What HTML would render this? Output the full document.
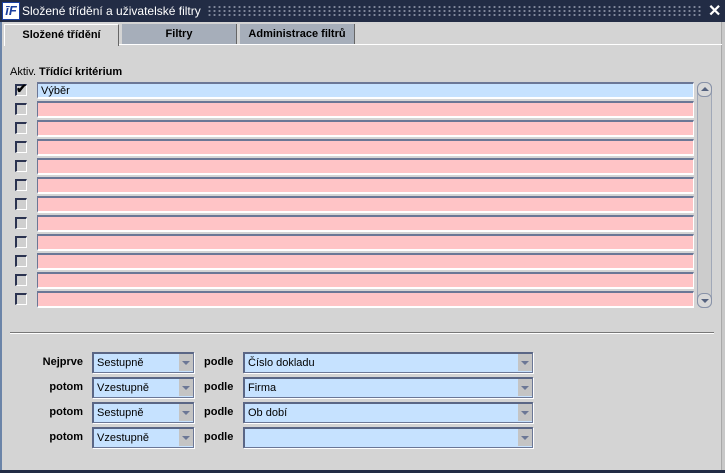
<!DOCTYPE html>
<html><head><meta charset="utf-8"><style>
*{margin:0;padding:0;box-sizing:border-box}
body{width:725px;height:473px;overflow:hidden;background:#d4d4d4;font-family:"Liberation Sans",sans-serif;font-size:11px;position:relative;color:#000}
.a{position:absolute}
.title{left:0;top:0;width:725px;height:22px;background:#222c45}
.dots{left:207px;top:5px;width:494px;height:12px;background-image:radial-gradient(circle,#7f879a 1px,transparent 1.2px);background-size:5px 4px}
.fld{position:absolute;height:17px;border-top:2px solid #6b7796;border-left:1px solid #6b7796;border-right:1px solid #fff;border-bottom:2px solid #fff}
.pink{background:#ffc4c6}
.blue{background:#c6e2ff}
.cb{position:absolute;width:12px;height:12px;background:#cfcfcf;border-top:2px solid #2b3350;border-left:2px solid #2b3350;border-right:1px solid #fff;border-bottom:1px solid #fff}
.lbl{position:absolute;font-weight:bold;font-size:11px;text-align:right}
.dd{position:absolute;height:21px;background:#c6e2ff;border:1px solid #6b7796;border-top:2px solid #5a6685;border-left:2px solid #5a6685;box-shadow:1px 1px 0 #fff;padding:3px 0 0 3px;font-size:11px}
.dd .b{position:absolute;right:0;top:0;width:14px;height:17px;background:#c4c4c4}
.dd .b:after{content:"";position:absolute;left:3px;top:7px;border-left:4px solid transparent;border-right:4px solid transparent;border-top:4px solid #6b7796}
.tab{position:absolute;top:24px;height:20px;font-weight:bold;font-size:11px;text-align:center;padding-top:4px}
</style></head><body>
<div class="a title"></div>
<div class="a" style="left:2px;top:2px;width:18px;height:18px;background:#fff;border:1px solid #1a3fa0"><div style="color:#1a3fa0;font-weight:bold;font-style:italic;font-size:13px;line-height:16px;text-align:center">īF</div></div>
<div class="a" style="left:22px;top:4px;color:#fff;font-size:12px">Složené třídění a uživatelské filtry</div>
<div class="a dots"></div>
<div class="a" style="left:708px;top:1px;color:#fff;font-size:16px;font-weight:bold">✕</div>
<div class="a" style="left:0;top:22px;width:2px;height:451px;background:#6b84a8"></div>
<div class="a" style="left:0;top:470px;width:725px;height:3px;background:#222c45"></div>
<div class="a" style="left:721px;top:22px;width:4px;height:448px;background:#c8c8c8;border-left:1px solid #a8a8a8"></div>
<div class="tab" style="left:4px;width:115px;background:#d4d4d4;border-left:1px solid #fff;border-top:1px solid #fff;border-right:1px solid #666;height:22px;z-index:2">Složené třídění</div>
<div class="tab" style="left:122px;width:115px;background:#a6aeba;border-right:1px solid #666">Filtry</div>
<div class="tab" style="left:240px;width:115px;background:#a6aeba;border-right:1px solid #666">Administrace filtrů</div>
<div class="a" style="left:4px;top:44px;width:718px;height:1px;background:#fff"></div>
<div class="a" style="left:10px;top:66px">Aktiv.</div>
<div class="a" style="left:39px;top:66px;font-weight:bold">Třídící kritérium</div>
<div id="rows"></div>
<div class="a" style="left:697px;top:82px;width:15px;height:226px;background:#cccccc;border:1px solid #a0a8b8;border-radius:6px"></div>
<div class="a" style="left:697px;top:82px;width:15px;height:15px;border:1px solid #8892a8;border-radius:6px;background:#d8d8d8"><div style="position:absolute;left:3px;top:4px;border-left:4px solid transparent;border-right:4px solid transparent;border-bottom:4px solid #55627f"></div></div>
<div class="a" style="left:697px;top:293px;width:15px;height:15px;border:1px solid #8892a8;border-radius:6px;background:#d8d8d8"><div style="position:absolute;left:3px;top:5px;border-left:4px solid transparent;border-right:4px solid transparent;border-top:4px solid #55627f"></div></div>
<div class="a" style="left:10px;top:332px;width:704px;height:2px;background:#777;border-bottom:1px solid #fff"></div>
<div id="bot"></div>
<script>
var h='';
for(var i=0;i<12;i++){var y=82+i*19;
h+='<div class="cb" style="left:15px;top:'+(y+2)+'px">'+(i==0?'<span style="position:absolute;left:-1px;top:-5px;font-size:13px;font-weight:bold">✔</span>':'')+'</div>';
h+='<div class="fld '+(i==0?'blue':'pink')+'" style="left:37px;top:'+y+'px;width:657px">'+(i==0?'<span style="position:absolute;left:3px;top:1px">Výběr</span>':'')+'</div>';}
document.getElementById('rows').innerHTML=h;
var L=['Nejprve','potom','potom','potom'],D=['Sestupně','Vzestupně','Sestupně','Vzestupně'],P=['Číslo dokladu','Firma','Ob dobí',''];
var b='';
for(var i=0;i<4;i++){var y=352+i*25;
b+='<div class="lbl" style="left:20px;width:63px;top:'+(y+4)+'px">'+L[i]+'</div>';
b+='<div class="dd" style="left:92px;top:'+y+'px;width:102px">'+D[i]+'<div class="b"></div></div>';
b+='<div class="lbl" style="left:204px;top:'+(y+4)+'px">podle</div>';
b+='<div class="dd" style="left:243px;top:'+y+'px;width:290px">'+P[i]+'<div class="b"></div></div>';}
document.getElementById('bot').innerHTML=b;
</script>
</body></html>
